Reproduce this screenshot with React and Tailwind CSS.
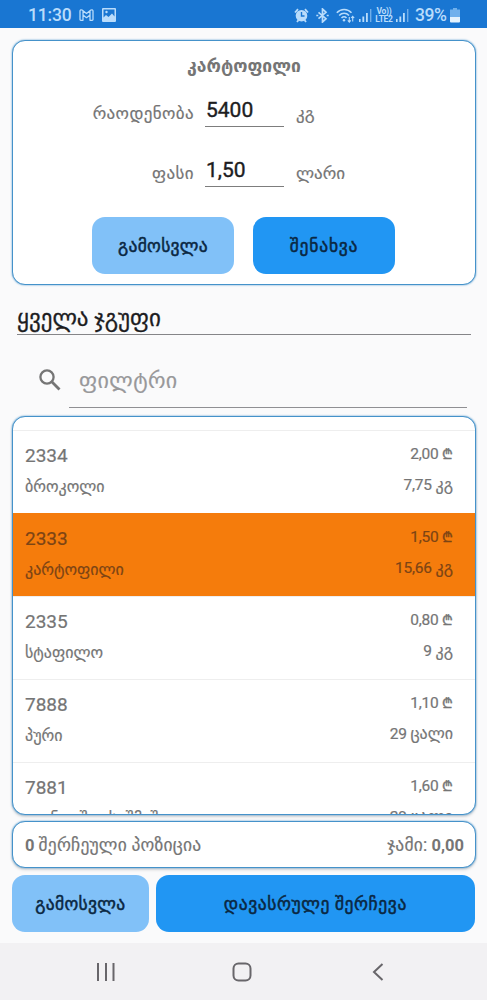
import React from 'react';

const products = [
  { code: '2334', name: 'ბროკოლი', price: '2,00', qty: '7,75', unit: 'კგ' },
  { code: '2333', name: 'კარტოფილი', price: '1,50', qty: '15,66', unit: 'კგ', selected: true },
  { code: '2335', name: 'სტაფილო', price: '0,80', qty: '9', unit: 'კგ' },
  { code: '7888', name: 'პური', price: '1,10', qty: '29', unit: 'ცალი' },
  { code: '7881', name: 'ლუნოეშოუსუშმეშ', price: '1,60', qty: '29', unit: 'ცალი' },
];

const Signal = () => (
  <svg className="h-[15px] w-[13px]" viewBox="0 0 13 15" fill="currentColor">
    <rect x="0" y="11" width="1.6" height="3" />
    <rect x="3.4" y="8.5" width="1.8" height="5.5" />
    <rect x="7" y="5" width="1.8" height="9" />
    <rect x="11" y="1" width="1.4" height="13" opacity="0.55" />
  </svg>
);

const StatusBar = () => (
  <div className="flex h-[28px] shrink-0 items-center bg-[#1976d2] pl-[28px] pr-[27px] pt-[2px] text-[#b9dcfb]">
    <span className="w-[44px] text-[17.5px] font-medium tracking-[-0.2px] whitespace-nowrap">11:30</span>
    <svg className="ml-[7px] h-3 w-[15px]" viewBox="0 0 15 12" fill="none" stroke="currentColor" strokeWidth="1.3" strokeLinejoin="round">
      <path d="M1 2v8.500a.8.8 0 0 0 .8.8H4V6l3.500 2.700L11 6v5.300h2.200a.8.8 0 0 0 .8-.8V2c0-1.200-1.300-1.500-2.100-.9L7.500 4.500 3.100 1.100C2.300.5 1 .8 1 2zM4 6V2M11 6V2" />
    </svg>
    <svg className="ml-2 h-[14px] w-[14px]" viewBox="0 0 14 14">
      <path fill="currentColor" fillRule="evenodd" d="M1 0h12a1 1 0 0 1 1 1v12a1 1 0 0 1-1 1H1a1 1 0 0 1-1-1V1a1 1 0 0 1 1-1zm.5 1.500v8L4 7l2.500 2L10 5.500l2.500 3v-7z" />
      <circle cx="4.500" cy="4" r="1.200" fill="currentColor" />
    </svg>

    <div className="ml-auto flex items-center">
      <svg className="h-[15px] w-[15px]" viewBox="0 0 15 15">
        <path d="M1 4.500 4 1.200M14 4.500 11 1.200M3 14l1.500-2M12 14l-1.500-2" stroke="currentColor" strokeWidth="1.800" />
        <circle cx="7.500" cy="7.700" r="5.800" fill="currentColor" />
        <path d="M7.500 4v4h3" fill="none" stroke="#1976d2" strokeWidth="1.400" />
      </svg>
      <svg className="ml-[7px] h-[15px] w-[13px]" viewBox="0 0 13 15" fill="none" stroke="currentColor" strokeWidth="1.700">
        <path d="M2.500 4.300 10 10.700 6.500 14V1L10 4.300 2.500 10.700" />
        <path d="M.3 7.500h2M10.700 7.500h2" />
      </svg>
      <svg className="ml-[7px] h-[15px] w-[19px]" viewBox="0 0 19 15" fill="none" stroke="currentColor" strokeWidth="1.500">
        <path d="M.8 4.800C4.800.4 11.500.4 15.500 4.800M3.200 7.400c2.800-3 7-3 9.800 0M5.500 10c1.600-1.600 3.600-1.600 5 0" />
        <circle cx="8" cy="12.300" r="1.200" fill="currentColor" stroke="none" />
        <path d="M13.300 9v5M11.800 12.400l1.500 1.700 1.500-1.700M16.700 13.500v-5M15.200 10l1.500-1.700L18.200 10" strokeWidth="1.100" />
      </svg>
      <div className="ml-[4px]"><Signal /></div>
      <div className="ml-[2px] w-[20px] text-center text-[8.500px] font-bold leading-[8px] tracking-[-0.3px]">
        <div>Vo))</div>
        <div>LTE2</div>
      </div>
      <div className="ml-[2px]"><Signal /></div>
      <span className="ml-[6px] w-[34px] text-[17.500px] font-medium tracking-[-0.4px] whitespace-nowrap">39%</span>
      <svg className="ml-[1px] h-[15px] w-[10px]" viewBox="0 0 10 15">
        <path d="M3 0h4v1.500h3V9H0V1.500h3z" fill="#6fb0ec" />
        <path d="M0 9h10v4.500a1 1 0 0 1-1 1H1a1 1 0 0 1-1-1z" fill="#e3f2fd" />
      </svg>
    </div>
  </div>
);

const Field = ({ label, value, unit }) => (
  <div className="flex h-[32px]">
    <div className="w-[181px] pt-[6px] text-right text-[17px] leading-6 tracking-[0.4px] text-[#757575] [-webkit-text-stroke:0.2px]">{label}</div>
    <div className="ml-[11px] h-[32px] w-[79px] border-b border-[#7d7d7d] pl-px text-[21px] leading-[31px] text-[#1d1d1f] [-webkit-text-stroke:0.4px]">{value}</div>
    <div className="ml-3 pt-[6px] text-[17px] leading-6 text-[#757575] [-webkit-text-stroke:0.2px]">{unit}</div>
  </div>
);

const Row = ({ item }) => (
  <div className={`flex h-[83px] shrink-0 justify-between border-t pl-3 pr-[22px] ${item.selected ? 'border-[#f57c0c] bg-[#f57c0c] text-[#7c4415]' : 'border-[#eeeeee] text-[#757575]'}`}>
    <div className="[-webkit-text-stroke:0.2px]">
      <div className="pt-[13px] text-[19px] leading-6">{item.code}</div>
      <div className="pt-[7px] text-[16px] leading-6 whitespace-nowrap">{item.name}</div>
    </div>
    <div className="text-right text-[15.500px] leading-6 tracking-[-0.2px] [-webkit-text-stroke:0.2px]">
      <div className="pt-[11px]">{item.price} <span className="text-[14px] [-webkit-text-stroke:0.4px]">₾</span></div>
      <div className="pt-[7px]">{item.qty} <span className="text-[16px] tracking-normal">{item.unit}</span></div>
    </div>
  </div>
);

export default function App() {
  return (
    <div className="flex h-[1000px] w-[487px] flex-col overflow-hidden bg-[#fafafb] font-[Roboto,'DejaVu_Sans',sans-serif]">
      <StatusBar />

      <div className="flex grow flex-col px-3">
        {/* product form */}
        <div className="mt-[12px] h-[245px] w-[464px] shrink-0 rounded-[13px] border border-[#4592ca] bg-white shadow-[0_0_2px_#4592ca]">
          <div className="pt-[13px] text-center text-[17.500px] font-bold leading-6 text-[#757575]">კარტოფილი</div>
          <div className="mt-[17px]"><Field label="რაოდენობა" value="5400" unit="კგ" /></div>
          <div className="mt-[28px]"><Field label="ფასი" value="1,50" unit="ლარი" /></div>
          <div className="mt-[30px] flex gap-[19px] pl-[79px] text-[17.500px] tracking-[0.3px] text-[#0a2742] [-webkit-text-stroke:0.5px]">
            <button className="h-[57px] w-[142px] rounded-[13px] bg-[#81c1f8] pt-px">გამოსვლა</button>
            <button className="h-[57px] w-[142px] rounded-[13px] bg-[#2196f3] pt-px tracking-[0.8px]">შენახვა</button>
          </div>
        </div>

        {/* group + filter */}
        <div className="ml-[5px] mt-[19px] h-[31px] w-[454px] shrink-0 border-b border-[#858588] text-[23px] leading-[30px] text-[#1d1d1f] [-webkit-text-stroke:0.3px]">ყველა ჯგუფი</div>
        <div className="flex h-[81px] shrink-0">
          <svg className="ml-[27px] mt-[34px] h-[22px] w-[22px] text-[#757575]" viewBox="0 0 22 22" fill="none" stroke="currentColor" strokeWidth="2.300">
            <circle cx="8" cy="8" r="6.600" />
            <path d="M12.800 12.800 20.500 20.500" strokeWidth="2.800" />
          </svg>
          <div className="ml-2 mt-6 h-[49px] w-[398px] border-b border-[#8f8f93] pl-[10px] text-[22px] leading-[43px] tracking-[0.4px] text-[#98989a] [-webkit-text-stroke:0.2px]">ფილტრი</div>
        </div>

        {/* product list */}
        <div className="h-[399px] w-[464px] shrink-0 overflow-hidden rounded-[13px] border border-[#4592ca] bg-white pt-[13px] shadow-[0_0_2px_#4592ca,0_2px_3px_#00000026]">
          <div className="flex flex-col">
            {products.map((p) => <Row key={p.code} item={p} />)}
          </div>
        </div>

        {/* totals */}
        <div className="mt-[6px] flex h-[47px] w-[464px] shrink-0 items-center justify-between rounded-[13px] border border-[#4592ca] bg-white pl-3 pr-[11px] pt-px text-[16.500px] text-[#757575] shadow-[0_0_2px_#4592ca,0_2px_3px_#00000026]">
          <span className="whitespace-nowrap"><b>0</b> <span className="text-[17.500px] tracking-[0.2px] [-webkit-text-stroke:0.2px]">შერჩეული პოზიცია</span></span>
          <span className="whitespace-nowrap"><span className="text-[17.500px] tracking-[0.2px] [-webkit-text-stroke:0.2px]">ჯამი:</span> <b>0,00</b></span>
        </div>

        <div className="mt-[7px] flex gap-[7px] text-[17.500px] tracking-[0.3px] text-[#0a2742] [-webkit-text-stroke:0.5px]">
          <button className="h-[57px] w-[137px] rounded-[13px] bg-[#81c1f8] pt-px">გამოსვლა</button>
          <button className="h-[57px] w-[320px] rounded-[13px] bg-[#2196f3] pt-px tracking-[0.6px]">დავასრულე შერჩევა</button>
        </div>
      </div>

      {/* system navigation */}
      <div className="flex h-[57px] shrink-0 items-center bg-[#f2f1f3] pl-[96px] text-[#68666a]">
        <svg className="h-5 w-5" viewBox="0 0 20 20" stroke="currentColor" strokeWidth="2"><path d="M2 1v18M10 1v18M17.500 1v18" /></svg>
        <svg className="ml-[116px] h-5 w-5" viewBox="0 0 20 20" fill="none" stroke="currentColor" strokeWidth="2"><rect x="1.500" y="1.500" width="17" height="17" rx="5" /></svg>
        <svg className="ml-[120px] h-5 w-3" viewBox="0 0 12 20" fill="none" stroke="currentColor" strokeWidth="2"><path d="M10.500 2 2 10l8.500 8" /></svg>
      </div>
    </div>
  );
}
